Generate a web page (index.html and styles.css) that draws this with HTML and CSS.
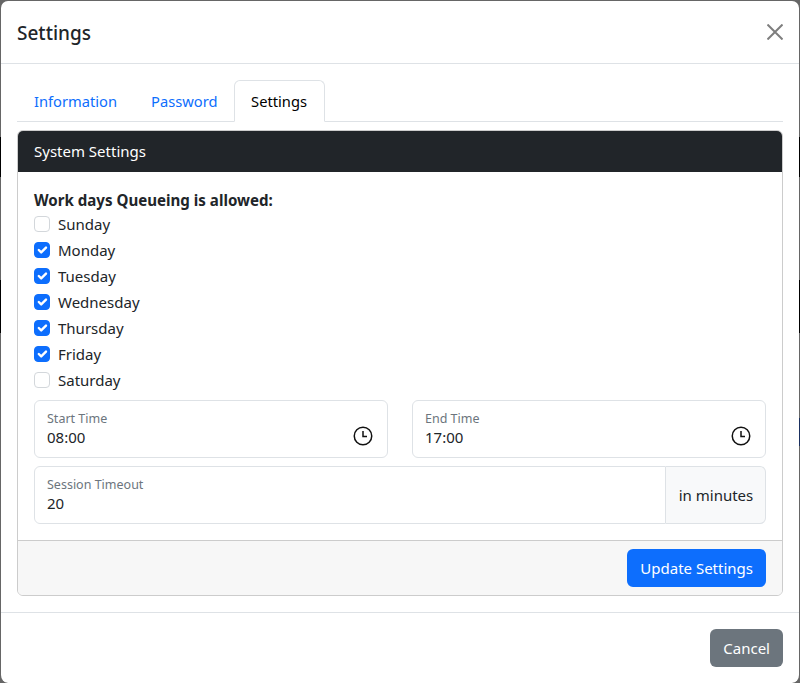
FILE: index.html
```html
<!DOCTYPE html>
<html lang="en">
<head>
    <meta charset="UTF-8">
    <title>Settings</title>
    <link rel="stylesheet" href="styles.css">
</head>
<body>
    <div class="modal">
        <div class="modal-header">
            <h5 class="modal-title">Settings</h5>
            <button class="btn-close" aria-label="Close">
                <svg width="16" height="16" viewBox="0 0 16 16"><path d="M0.5 0.5 L15.5 15.5 M15.5 0.5 L0.5 15.5" stroke="#000" stroke-width="2" fill="none"/></svg>
            </button>
        </div>

        <div class="modal-body">
            <ul class="nav-tabs">
                <li class="nav-link">Information</li>
                <li class="nav-link">Password</li>
                <li class="nav-link active">Settings</li>
            </ul>

            <div class="card">
                <div class="card-header">System Settings</div>
                <div class="card-body">
                    <div class="days-title">Work days Queueing is allowed:</div>
                    <div class="form-check"><span class="check"></span><span>Sunday</span></div>
                    <div class="form-check"><span class="check checked"><svg width="16" height="16" viewBox="0 0 20 20"><path d="M6 10l3 3l6-6" stroke="#fff" stroke-width="3" stroke-linecap="round" stroke-linejoin="round" fill="none"/></svg></span><span>Monday</span></div>
                    <div class="form-check"><span class="check checked"><svg width="16" height="16" viewBox="0 0 20 20"><path d="M6 10l3 3l6-6" stroke="#fff" stroke-width="3" stroke-linecap="round" stroke-linejoin="round" fill="none"/></svg></span><span>Tuesday</span></div>
                    <div class="form-check"><span class="check checked"><svg width="16" height="16" viewBox="0 0 20 20"><path d="M6 10l3 3l6-6" stroke="#fff" stroke-width="3" stroke-linecap="round" stroke-linejoin="round" fill="none"/></svg></span><span>Wednesday</span></div>
                    <div class="form-check"><span class="check checked"><svg width="16" height="16" viewBox="0 0 20 20"><path d="M6 10l3 3l6-6" stroke="#fff" stroke-width="3" stroke-linecap="round" stroke-linejoin="round" fill="none"/></svg></span><span>Thursday</span></div>
                    <div class="form-check"><span class="check checked"><svg width="16" height="16" viewBox="0 0 20 20"><path d="M6 10l3 3l6-6" stroke="#fff" stroke-width="3" stroke-linecap="round" stroke-linejoin="round" fill="none"/></svg></span><span>Friday</span></div>
                    <div class="form-check"><span class="check"></span><span>Saturday</span></div>

                    <div class="time-row">
                        <div class="float-field">
                            <div class="field-text">
                                <label>Start Time</label>
                                <div class="value">08:00</div>
                            </div>
                            <svg class="clock" width="20" height="20" viewBox="0 0 20 20"><circle cx="10" cy="10" r="8.75" stroke="#111" stroke-width="1.5" fill="none"/><path d="M10 5v5.5h4" stroke="#111" stroke-width="1.5" fill="none"/></svg>
                        </div>
                        <div class="float-field">
                            <div class="field-text">
                                <label>End Time</label>
                                <div class="value">17:00</div>
                            </div>
                            <svg class="clock" width="20" height="20" viewBox="0 0 20 20"><circle cx="10" cy="10" r="8.75" stroke="#111" stroke-width="1.5" fill="none"/><path d="M10 5v5.5h4" stroke="#111" stroke-width="1.5" fill="none"/></svg>
                        </div>
                    </div>

                    <div class="input-group">
                        <div class="float-field grouped">
                            <div class="field-text">
                                <label>Session Timeout</label>
                                <div class="value">20</div>
                            </div>
                        </div>
                        <span class="input-group-text">in minutes</span>
                    </div>
                </div>
                <div class="card-footer">
                    <button class="btn btn-primary">Update Settings</button>
                </div>
            </div>
        </div>

        <div class="modal-footer">
            <button class="btn btn-secondary">Cancel</button>
        </div>
    </div>
</body>
</html>
```

FILE: styles.css
```css
* {
    box-sizing: border-box;
}

body {
    margin: 0;
    height: 683px;
    overflow: hidden;
    background:
        linear-gradient(#1a2f5f, #1a2f5f) right 418px / 1px 28px no-repeat,
        linear-gradient(#666 137px, #000 137px, #000 177px, #666 177px, #666 280px, #000 280px, #000 333px, #666 333px);
    font-family: 'Noto Sans', sans-serif;
    font-size: 15px;
    color: #212529;
}

.modal {
    background: #fff;
    background-clip: padding-box;
    height: 683px;
    border: 1px solid transparent;
    border-bottom: none;
    border-radius: 8px;
    display: flex;
    flex-direction: column;
}

.modal-header {
    height: 63px;
    border-bottom: 1px solid #dee2e6;
    padding: 2px 16px 0;
    display: flex;
    align-items: center;
    justify-content: space-between;
    flex: none;
}

.modal-title {
    margin: 0;
    font-size: 19px;
    font-weight: 500;
}

.btn-close {
    border: none;
    background: none;
    padding: 0;
    width: 16px;
    height: 16px;
    margin-top: -2px;
    opacity: 0.5;
    display: block;
}

.modal-body {
    padding: 16px;
    flex: 1;
}

.nav-tabs {
    list-style: none;
    margin: 0;
    padding: 0;
    display: flex;
    height: 42px;
    border-bottom: 1px solid #dee2e6;
    font-size: 14.7px;
}

.nav-link {
    height: 42px;
    padding: 0 16px;
    display: flex;
    align-items: center;
    color: #0d6efd;
    border: 1px solid transparent;
    border-radius: 6px 6px 0 0;
}

.nav-link.active {
    width: 91px;
    margin-left: -1px;
    padding: 0;
    justify-content: center;
    color: #000;
    background: #fff;
    border-color: #dee2e6 #dee2e6 #fff;
}

.card {
    margin-top: 8px;
    border: 1px solid #ccc;
    border-radius: 6px;
    overflow: hidden;
}

.card-header {
    background: #212529;
    color: #fff;
    height: 41px;
    padding: 0 16px 2px;
    display: flex;
    align-items: center;
}

.card-body {
    padding: 16px;
}

.days-title {
    font-weight: 700;
    font-size: 15.1px;
    height: 24px;
    line-height: 24px;
    margin-bottom: -1px;
}

.form-check {
    height: 26px;
    display: flex;
    align-items: center;
    gap: 8px;
}

.check {
    width: 16px;
    height: 16px;
    border: 1px solid #d3d7db;
    border-radius: 4px;
    background: #fff;
    display: block;
}

.check svg {
    display: block;
    margin: -1px;
}

.check.checked {
    background: #0d6efd;
    border-color: #0d6efd;
}

.time-row {
    display: grid;
    grid-template-columns: 1fr 1fr;
    gap: 24px;
    margin-top: 7px;
}

.float-field {
    height: 58px;
    border: 1px solid #dee2e6;
    border-radius: 6px;
    padding: 0 12px;
    display: flex;
    align-items: center;
    justify-content: space-between;
}

.field-text {
    padding-bottom: 1px;
}

.field-text label {
    display: block;
    font-size: 12.5px;
    line-height: 18px;
    color: #6c757d;
}

.value {
    line-height: 20px;
    margin-top: -1px;
}

.clock {
    margin-right: 2px;
    margin-top: 14px;
}

.input-group {
    display: flex;
    margin-top: 8px;
}

.float-field.grouped {
    flex: 1;
    border-radius: 6px 0 0 6px;
}

.input-group-text {
    width: 100px;
    height: 58px;
    padding-left: 1px;
    display: flex;
    align-items: center;
    justify-content: center;
    background: #f8f9fa;
    border: 1px solid #dee2e6;
    border-left: none;
    border-radius: 0 6px 6px 0;
}

.card-footer {
    height: 55px;
    background: #f7f7f7;
    border-top: 1px solid #ccc;
    padding: 0 16px;
    display: flex;
    align-items: center;
    justify-content: flex-end;
}

.btn {
    border: none;
    border-radius: 6px;
    height: 38px;
    padding: 0 13px;
    color: #fff;
    font-family: inherit;
    font-size: 15px;
}

.btn-primary {
    background: #0d6efd;
}

.btn-secondary {
    background: #6c757d;
}

.modal-footer {
    flex: none;
    height: 71px;
    border-top: 1px solid #dee2e6;
    padding: 16px;
    display: flex;
    justify-content: flex-end;
}
```
